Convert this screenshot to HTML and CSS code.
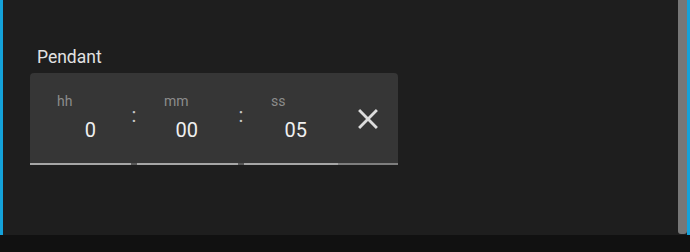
FILE: index.html
```html
<!DOCTYPE html>
<html lang="en">
<head>
<meta charset="utf-8">
<title>Duration</title>
<link rel="stylesheet" href="styles.css">
</head>
<body>
<div class="app">
  <div class="rail"></div>
  <main class="content">
    <div class="field-label">Pendant</div>
    <div class="time-input">
      <div class="unit unit--hh">
        <span class="unit-label">hh</span>
        <span class="unit-value">0</span>
      </div>
      <div class="sep">:</div>
      <div class="unit unit--mm">
        <span class="unit-label">mm</span>
        <span class="unit-value">00</span>
      </div>
      <div class="sep">:</div>
      <div class="unit unit--ss">
        <span class="unit-label">ss</span>
        <span class="unit-value">05</span>
      </div>
      <button class="clear" type="button" aria-label="Clear">
        <svg viewBox="0 0 24 24" width="34" height="34"><path fill="currentColor" d="M19,6.41L17.59,5L12,10.59L6.41,5L5,6.41L10.59,12L5,17.59L6.41,19L12,13.41L17.59,19L19,17.59L13.41,12L19,6.41Z"/></svg>
      </button>
    </div>
  </main>
  <div class="scrollbar"><div class="thumb"></div></div>
  <div class="rail"></div>
</div>
<div class="footer"></div>
</body>
</html>
```

FILE: styles.css
```css
html, body {
  margin: 0;
  padding: 0;
  background: #1e1e1e;
  font-family: Roboto, "Noto Sans", sans-serif;
  overflow: hidden;
}

.app {
  display: flex;
  height: 235px;
}

.rail {
  width: 3px;
  background: #14a2da;
  flex: none;
}

.content {
  flex: 1;
  padding: 47px 0 0 27px;
}

.field-label {
  font-size: 17.5px;
  line-height: 20px;
  color: #e2e2e2;
  padding-left: 7px;
  margin-bottom: 6px;
}

.time-input {
  display: flex;
  width: 368px;
  height: 92px;
  background: #363636;
  border-radius: 4px 4px 0 0;
}

.unit {
  display: flex;
  flex-direction: column;
  padding-top: 20px;
  box-sizing: border-box;
  border-bottom: 2px solid #a6a6a6;
}

.unit--hh, .unit--mm { width: 101px; }
.unit--ss { width: 94px; }

.unit-label {
  font-size: 14px;
  line-height: 16px;
  color: #8c8c8c;
  padding-left: 27px;
}

.unit-value {
  font-size: 20px;
  line-height: 24px;
  color: #f0f0f0;
  margin-top: 9px;
  text-align: right;
}

.unit--hh .unit-value { padding-right: 35px; }
.unit--mm .unit-value { padding-right: 40px; }
.unit--ss .unit-value { padding-right: 31px; }

.sep {
  width: 6px;
  box-sizing: border-box;
  border-bottom: 2px solid #575757;
  color: #c8c8c8;
  font-size: 20px;
  line-height: 24px;
  text-align: center;
  padding-top: 30px;
}

.clear {
  flex: 1;
  display: flex;
  align-items: center;
  justify-content: center;
  background: none;
  border: 0;
  border-bottom: 2px solid #7e7e7e;
  padding: 0;
  color: #dcdcdc;
}

.clear svg {
  display: block;
  margin-top: 1px;
}

.scrollbar {
  width: 9px;
  flex: none;
  background: #1e1e1e;
}

.thumb {
  height: 234px;
  background: #777777;
  border-radius: 0 0 3px 3px;
}

.footer {
  height: 17px;
  background: #111111;
}
```
